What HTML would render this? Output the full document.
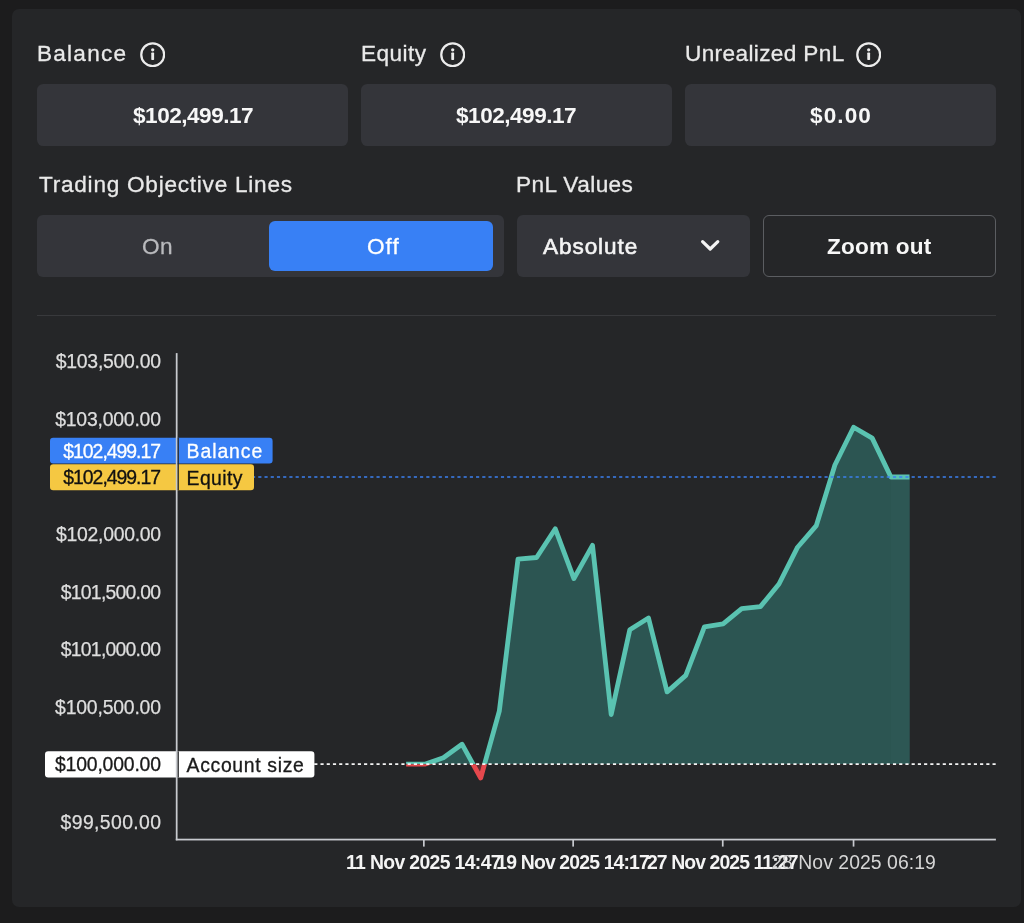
<!DOCTYPE html>
<html lang="en">
<head>
<meta charset="utf-8">
<title>Account Overview</title>
<style>
  html, body { margin: 0; padding: 0; }
  body {
    width: 1024px; height: 923px; overflow: hidden; position: relative;
    background: #1c1c1d;
    font-family: "Liberation Sans", sans-serif;
    color: #ececec;
  }
  .card {
    position: absolute; left: 12px; top: 9px; width: 1009px; height: 898px;
    background: #252628; border-radius: 7px;
  }
  .t { position: absolute; white-space: nowrap; line-height: 1; margin: 0; will-change: transform; }
  .lbl { font-size: 22.6px; font-weight: 400; color: #e9e9e9; -webkit-text-stroke: 0.3px currentColor; }
  .box {
    position: absolute; top: 84px; height: 61.9px; width: 311.3px;
    background: #34353a; border-radius: 6.3px;
  }
  .val { font-size: 22.6px; font-weight: 700; color: #f7f7f7; }
  .info { position: absolute; width: 25.4px; height: 25.4px; top: 41.8px; }
  .toggle {
    position: absolute; left: 37px; top: 215px; width: 467.2px; height: 62px;
    background: #34353a; border-radius: 6px;
  }
  .off {
    position: absolute; left: 269px; top: 221px; width: 224px; height: 50px;
    background: #3880f5; border-radius: 6px;
  }
  .select {
    position: absolute; left: 516.7px; top: 215px; width: 233.3px; height: 62px;
    background: #34353a; border-radius: 6px;
  }
  .zoom {
    position: absolute; left: 762.7px; top: 215px; width: 233.3px; height: 61.8px;
    box-sizing: border-box; border: 1.6px solid #5b5d61; border-radius: 6px;
  }
  .divider { position: absolute; left: 37px; top: 314.6px; width: 959px; height: 1.6px; background: #38393c; }
  svg.chart { position: absolute; left: 0; top: 0; }
  svg text { font-family: "Liberation Sans", sans-serif; }
</style>
</head>
<body>
<div class="card"></div>

<!-- Row 1: stats -->
<p class="t lbl" id="l1" style="left:37.2px;top:43.2px;letter-spacing:1.23px">Balance</p>
<svg class="info" style="left:139.5px" viewBox="0 0 26 26"><circle cx="13" cy="13" r="11.7" fill="none" stroke="#ececec" stroke-width="2.3"/><circle cx="13" cy="8" r="1.7" fill="#ececec"/><rect x="11.55" y="10.8" width="2.9" height="7.6" rx="0.7" fill="#ececec"/></svg>
<div class="box" style="left:37px"></div>
<p class="t val" id="v1" style="left:132.7px;top:104.6px;letter-spacing:-0.5px">$102,499.17</p>

<p class="t lbl" id="l2" style="left:361px;top:43.2px;letter-spacing:0.45px">Equity</p>
<svg class="info" style="left:440px" viewBox="0 0 26 26"><circle cx="13" cy="13" r="11.7" fill="none" stroke="#ececec" stroke-width="2.3"/><circle cx="13" cy="8" r="1.7" fill="#ececec"/><rect x="11.55" y="10.8" width="2.9" height="7.6" rx="0.7" fill="#ececec"/></svg>
<div class="box" style="left:360.8px"></div>
<p class="t val" id="v2" style="left:456.2px;top:104.6px;letter-spacing:-0.5px">$102,499.17</p>

<p class="t lbl" id="l3" style="left:684.5px;top:43.2px;letter-spacing:0.37px">Unrealized PnL</p>
<svg class="info" style="left:855.5px" viewBox="0 0 26 26"><circle cx="13" cy="13" r="11.7" fill="none" stroke="#ececec" stroke-width="2.3"/><circle cx="13" cy="8" r="1.7" fill="#ececec"/><rect x="11.55" y="10.8" width="2.9" height="7.6" rx="0.7" fill="#ececec"/></svg>
<div class="box" style="left:684.6px"></div>
<p class="t val" id="v3" style="left:810px;top:104.6px;letter-spacing:1.1px">$0.00</p>

<!-- Row 2: controls -->
<p class="t lbl" id="l4" style="left:38.5px;top:174.2px;letter-spacing:0.75px">Trading Objective Lines</p>
<div class="toggle"></div>
<p class="t lbl" id="on" style="left:142.2px;top:235.7px;letter-spacing:0.5px;color:#b9babd">On</p>
<div class="off"></div>
<p class="t lbl" id="off" style="left:367.3px;top:235.7px;letter-spacing:1px;color:#fff">Off</p>

<p class="t lbl" id="l5" style="left:516.2px;top:174.2px;letter-spacing:0.43px">PnL Values</p>
<div class="select"></div>
<p class="t lbl" id="abs" style="left:542.8px;top:235.7px;color:#f4f4f4;letter-spacing:0.9px;-webkit-text-stroke:0.6px #f4f4f4">Absolute</p>
<svg style="position:absolute;left:698px;top:236px" width="24" height="18" viewBox="0 0 24 18"><path d="M4.6 5.6 L12.2 13 L19.8 5.6" fill="none" stroke="#f4f4f4" stroke-width="3.2" stroke-linecap="round" stroke-linejoin="round"/></svg>
<div class="zoom"></div>
<p class="t val" id="zo" style="left:826.5px;top:235.8px;letter-spacing:0.2px">Zoom out</p>

<div class="divider"></div>

<svg class="chart" id="chart" width="1024" height="923" viewBox="0 0 1024 923">
<defs>
<clipPath id="above"><rect x="170" y="340" width="840" height="424.20000000000005"/></clipPath>
<clipPath id="below"><rect x="170" y="764.2" width="840" height="74.79999999999995"/></clipPath>
</defs>
<g font-size="19.4" fill="#dedede" stroke="#dedede" stroke-width="0.25" text-anchor="end">
<text x="161" y="368.3" textLength="105.2" lengthAdjust="spacing">$103,500.00</text>
<text x="161" y="425.9" textLength="105.8" lengthAdjust="spacing">$103,000.00</text>
<text x="161" y="541.1" textLength="104.9" lengthAdjust="spacing">$102,000.00</text>
<text x="161" y="598.7" textLength="100.2" lengthAdjust="spacing">$101,500.00</text>
<text x="161" y="656.3" textLength="100.2" lengthAdjust="spacing">$101,000.00</text>
<text x="161" y="713.9" textLength="105.9" lengthAdjust="spacing">$100,500.00</text>
<text x="161" y="829.1" textLength="100.4" lengthAdjust="spacing">$99,500.00</text>
</g>
<g clip-path="url(#above)"><path d="M406.1,764.2 L406.1,764.2 L424.7,764.2 L443.4,757.8 L462.0,744.2 L480.7,778.0 L499.3,711.2 L518.0,559.1 L536.6,557.5 L555.3,528.8 L573.9,578.6 L592.5,545.3 L611.2,714.6 L629.8,629.7 L648.5,618.0 L667.1,691.9 L685.8,675.4 L704.4,626.9 L723.1,623.9 L741.7,608.7 L760.4,606.6 L779.0,584.0 L797.6,547.2 L816.3,525.6 L834.9,465.0 L853.6,427.2 L872.2,438.1 L890.9,477.0 L909.5,477.0 L909.5,764.2 Z" fill="#2c5552"/><rect x="890.9" y="477.0" width="18.6" height="287.2" fill="#2d5754"/><polyline points="406.1,764.2 424.7,764.2 443.4,757.8 462.0,744.2 480.7,778.0 499.3,711.2 518.0,559.1 536.6,557.5 555.3,528.8 573.9,578.6 592.5,545.3 611.2,714.6 629.8,629.7 648.5,618.0 667.1,691.9 685.8,675.4 704.4,626.9 723.1,623.9 741.7,608.7 760.4,606.6 779.0,584.0 797.6,547.2 816.3,525.6 834.9,465.0 853.6,427.2 872.2,438.1 890.9,477.0 909.5,477.0" fill="none" stroke="#5ac3b1" stroke-width="4.8" stroke-linejoin="round" stroke-linecap="butt"/></g>
<g clip-path="url(#below)"><path d="M406.1,764.2 L406.1,764.2 L424.7,764.2 L443.4,757.8 L462.0,744.2 L480.7,778.0 L499.3,711.2 L518.0,559.1 L536.6,557.5 L555.3,528.8 L573.9,578.6 L592.5,545.3 L611.2,714.6 L629.8,629.7 L648.5,618.0 L667.1,691.9 L685.8,675.4 L704.4,626.9 L723.1,623.9 L741.7,608.7 L760.4,606.6 L779.0,584.0 L797.6,547.2 L816.3,525.6 L834.9,465.0 L853.6,427.2 L872.2,438.1 L890.9,477.0 L909.5,477.0 L909.5,764.2 Z" fill="#5e2b2f"/><polyline points="406.1,764.2 424.7,764.2 443.4,757.8 462.0,744.2 480.7,778.0 499.3,711.2 518.0,559.1 536.6,557.5 555.3,528.8 573.9,578.6 592.5,545.3 611.2,714.6 629.8,629.7 648.5,618.0 667.1,691.9 685.8,675.4 704.4,626.9 723.1,623.9 741.7,608.7 760.4,606.6 779.0,584.0 797.6,547.2 816.3,525.6 834.9,465.0 853.6,427.2 872.2,438.1 890.9,477.0 909.5,477.0" fill="none" stroke="#e5484d" stroke-width="4.8" stroke-linejoin="round" stroke-linecap="butt"/></g>
<line x1="308.04" y1="764.05" x2="996.2" y2="764.05" stroke="#f4f4f4" stroke-width="1.75" stroke-dasharray="3.15 3.0725"/>
<line x1="245.815" y1="477" x2="996.2" y2="477" stroke="#3b80f0" stroke-width="1.65" stroke-dasharray="3.15 3.0725"/>
<rect x="50" y="437.7" width="222.6" height="25.8" rx="3.2" fill="#3880f5"/>
<text x="161" y="457.5" font-size="19.4" fill="#ffffff" stroke="#ffffff" stroke-width="0.3" text-anchor="end" textLength="97.7" lengthAdjust="spacing">$102,499.17</text>
<text x="186.6" y="458.1" font-size="19.4" fill="#ffffff" stroke="#ffffff" stroke-width="0.3" textLength="75.6" lengthAdjust="spacing">Balance</text>
<rect x="50" y="464.3" width="204.0" height="25.9" rx="3.2" fill="#f5c842"/>
<text x="161" y="484.1" font-size="19.4" fill="#111111" stroke="#111111" stroke-width="0.3" text-anchor="end" textLength="97.7" lengthAdjust="spacing">$102,499.17</text>
<text x="186.6" y="484.8" font-size="19.4" fill="#111111" stroke="#111111" stroke-width="0.3" textLength="55.8" lengthAdjust="spacing">Equity</text>
<rect x="45" y="751.3" width="269.4" height="26.2" rx="3.2" fill="#ffffff"/>
<text x="161" y="771.3" font-size="19.4" fill="#1a1a1a" stroke="#1a1a1a" stroke-width="0.3" text-anchor="end" textLength="106.0" lengthAdjust="spacing">$100,000.00</text>
<text x="186.6" y="771.9" font-size="19.4" fill="#1a1a1a" stroke="#1a1a1a" stroke-width="0.3" textLength="117.2" lengthAdjust="spacing">Account size</text>
<rect x="175.8" y="353.1" width="1.75" height="487.2" fill="#c8cacf"/>
<rect x="177.55" y="437.7" width="1.3" height="52.5" fill="#252628"/>
<rect x="177.55" y="751.3" width="1.3" height="26.2" fill="#252628"/>
<rect x="175.8" y="838.7" width="820.1" height="1.75" fill="#c8cacf"/>
<rect x="423.0" y="839" width="1.7" height="7.6" fill="#c8cacf"/>
<text x="423.8" y="868.9" font-size="19.4" font-weight="700" fill="#f4f4f4" text-anchor="middle" textLength="155.5" lengthAdjust="spacing">11 Nov 2025 14:47</text>
<rect x="572.3" y="839" width="1.7" height="7.6" fill="#c8cacf"/>
<text x="573.1" y="868.9" font-size="19.4" font-weight="700" fill="#f4f4f4" text-anchor="middle" textLength="153.5" lengthAdjust="spacing">19 Nov 2025 14:17</text>
<rect x="721.9" y="839" width="1.7" height="7.6" fill="#c8cacf"/>
<text x="722.7" y="868.9" font-size="19.4" font-weight="700" fill="#f4f4f4" text-anchor="middle" textLength="151.5" lengthAdjust="spacing">27 Nov 2025 11:27</text>
<rect x="852.7" y="839" width="1.7" height="7.6" fill="#c8cacf"/>
<text x="853.5" y="868.9" font-size="19.4" fill="#d6d6d6" text-anchor="middle" textLength="164.5" lengthAdjust="spacing">28 Nov 2025 06:19</text>
</svg>
</body>
</html>
